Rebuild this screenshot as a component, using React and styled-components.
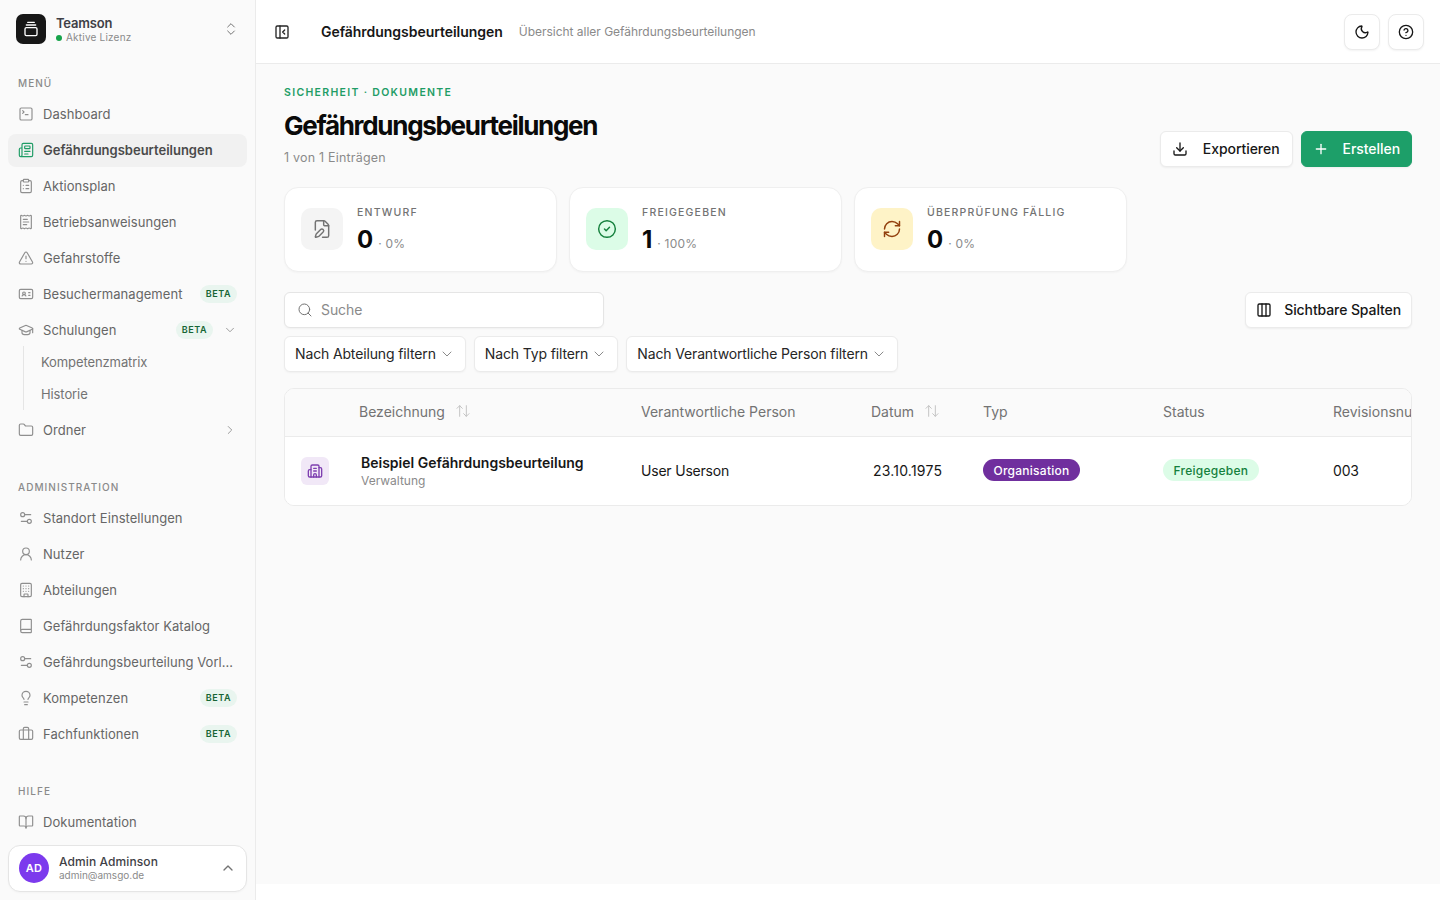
import React from 'react';
import styled, { createGlobalStyle } from 'styled-components';
import {
  SquareTerminal, Newspaper, ClipboardList, ReceiptText, TriangleAlert, IdCard, GraduationCap,
  Folder, Settings2, UserRound, Building, Book, Lightbulb, Briefcase, BookOpen,
  GalleryVerticalEnd, ChevronsUpDown, ChevronDown, ChevronRight, ChevronUp, PanelLeftClose,
  Moon, CircleHelp, Download, Plus, FilePen, CircleCheck, RefreshCw, Search, Columns3,
  ArrowUpDown, Building2,
} from 'lucide-react';

const Global = createGlobalStyle`
  * { box-sizing: border-box; }
  html, body { margin: 0; padding: 0; background: #fff; }
  body { font-family: Inter, "Liberation Sans", sans-serif; color: #0a0a0a; -webkit-font-smoothing: antialiased; }
`;

const Shell = styled.div`
  display: flex;
  width: 1440px;
  height: 900px;
  overflow: hidden;
  background: #fff;
`;

const Sidebar = styled.aside`
  width: 256px;
  flex: none;
  height: 900px;
  display: flex;
  flex-direction: column;
  background: #fafafa;
  border-right: 1px solid #ebebeb;
`;

const Brand = styled.div`
  height: 75px;
  flex: none;
  padding: 14px 16px 0;
  display: flex;
  align-items: flex-start;
  gap: 10px;
`;

const Logo = styled.div`
  width: 30px;
  height: 30px;
  border-radius: 7px;
  background: #171717;
  color: #fff;
  display: flex;
  align-items: center;
  justify-content: center;
`;

const BrandText = styled.div`
  flex: 1;
  display: flex;
  flex-direction: column;
  padding-top: 1px;
`;

const BrandName = styled.div`
  font-size: 13px;
  line-height: 16px;
  font-weight: 600;
  letter-spacing: -0.2px;
  color: #3f3f46;
`;

const BrandStatus = styled.div`
  display: flex;
  align-items: center;
  gap: 4px;
  font-size: 10px;
  line-height: 13px;
  letter-spacing: 0.2px;
  color: #8a8a8a;
`;

const Dot = styled.span`
  width: 6px;
  height: 6px;
  border-radius: 50%;
  background: #16a34a;
`;

const BrandToggle = styled.div`
  color: #737373;
  height: 30px;
  display: flex;
  align-items: center;
`;

const Nav = styled.nav`
  flex: 1;
  min-height: 0;
  display: flex;
  flex-direction: column;
  padding: 0 8px;
`;

const Section = styled.section`
  display: flex;
  flex-direction: column;
  gap: 3px;
  & + & { margin-top: 32px; }
`;

const SectionLabel = styled.div`
  height: 16px;
  margin-bottom: 4px;
  padding-left: 10px;
  font-size: 10px;
  line-height: 16px;
  font-weight: 500;
  letter-spacing: 1.05px;
  color: #8a8a8a;
`;

const Item = styled.div`
  height: 33px;
  flex: none;
  display: flex;
  align-items: center;
  gap: 9px;
  padding: 0 10px 1px;
  border-radius: 8px;
  font-size: 13px;
  letter-spacing: ${p => (p.$active ? '0' : '0.05px')};
  font-weight: ${p => (p.$active ? 600 : 400)};
  color: ${p => (p.$active ? '#4a4a4a' : '#666')};
  background: ${p => (p.$active ? '#f1f1f1' : 'transparent')};
  svg { flex: none; color: ${p => (p.$active ? '#1f9d66' : '#8f8f8f')}; }
`;

const ItemLabel = styled.span`
  flex: 1;
  min-width: 0;
  white-space: nowrap;
  overflow: hidden;
  text-overflow: ellipsis;
`;

const Beta = styled.span`
  flex: none;
  width: 37px;
  height: 18px;
  border-radius: 9px;
  margin-right: ${p => (p.$inline ? '1px' : '0')};
  background: #e9f5ef;
  color: #166534;
  font-size: 9px;
  line-height: 18px;
  font-weight: 600;
  letter-spacing: 0.6px;
  text-align: center;
`;

const Group = styled.div`
  display: flex;
  flex-direction: column;
`;

const Sub = styled.div`
  margin: -1px 0 1px 15px;
  border-left: 1px solid #e5e5e5;
  display: flex;
  flex-direction: column;
`;

const SubItem = styled.div`
  height: 32px;
  padding: 0 0 1px 17px;
  display: flex;
  align-items: center;
  font-size: 13px;
  letter-spacing: -0.1px;
  color: #737373;
`;

const SideFoot = styled.div`
  flex: none;
  padding: 0 8px 8px;
`;

const UserCard = styled.div`
  height: 47px;
  border: 1px solid #e5e5e5;
  border-radius: 12px;
  background: #fff;
  display: flex;
  align-items: center;
  gap: 10px;
  padding: 0 10px 1px 10px;
  box-shadow: 0 1px 2px rgba(0,0,0,.03);
  svg { color: #737373; }
`;

const Avatar = styled.div`
  width: 30px;
  height: 30px;
  border-radius: 50%;
  background: #7c3aed;
  color: #fff;
  font-size: 11px;
  font-weight: 600;
  letter-spacing: 0.3px;
  display: flex;
  align-items: center;
  justify-content: center;
`;

const UserText = styled.div`
  flex: 1;
  display: flex;
  flex-direction: column;
`;

const UserName = styled.div`
  font-size: 12px;
  line-height: 15px;
  font-weight: 500;
  letter-spacing: 0.1px;
  color: #3f3f46;
`;

const UserMail = styled.div`
  font-size: 10px;
  line-height: 13px;
  color: #8a8a8a;
`;

const Column = styled.div`
  flex: 1;
  min-width: 0;
  display: flex;
  flex-direction: column;
  height: 884px;
  background: #fafafa;
`;

const Topbar = styled.header`
  height: 64px;
  flex: none;
  background: #fff;
  border-bottom: 1px solid #ebebeb;
  display: flex;
  align-items: center;
  padding: 0 16px 0 18px;
`;

const TopTitle = styled.div`
  margin-left: 31px;
  font-size: 14px;
  font-weight: 600;
  letter-spacing: -0.04px;
  color: #171717;
`;

const TopSub = styled.div`
  margin-left: 16px;
  flex: 1;
  font-size: 12px;
  letter-spacing: -0.02px;
  color: #8a8a8a;
`;

const IconBtn = styled.button`
  width: 36px;
  height: 36px;
  margin-left: 8px;
  padding: 0;
  border: 1px solid #ebebeb;
  border-radius: 8px;
  background: #fff;
  color: #171717;
  display: flex;
  align-items: center;
  justify-content: center;
  box-shadow: 0 1px 2px rgba(0,0,0,.05);
`;

const Content = styled.main`
  flex: 1;
  padding: 21px 28px 0;
  display: flex;
  flex-direction: column;
`;

const PageHead = styled.div`
  display: flex;
  align-items: flex-end;
  justify-content: space-between;
`;

const Eyebrow = styled.div`
  font-size: 10.5px;
  line-height: 16px;
  font-weight: 600;
  letter-spacing: 1.32px;
  color: #1f9d66;
`;

const H1 = styled.h1`
  margin: 8px 0 0;
  font-size: 26px;
  line-height: 34px;
  font-weight: 700;
  letter-spacing: -1.3px;
  color: #0a0a0a;
`;

const Count = styled.div`
  margin-top: 6px;
  font-size: 12.5px;
  line-height: 18px;
  letter-spacing: 0.2px;
  color: #8a8a8a;
`;

const Actions = styled.div`
  display: flex;
  gap: 8px;
`;

const Button = styled.button`
  height: 36px;
  display: flex;
  align-items: center;
  gap: ${p => p.$gap}px;
  padding: 0 ${p => p.$pr}px 1px 11px;
  border-radius: 6px;
  font-family: inherit;
  font-size: 14px;
  font-weight: 500;
  letter-spacing: -0.05px;
  border: 1px solid ${p => (p.$primary ? '#1d9f69' : '#ebebeb')};
  background: ${p => (p.$primary ? '#1d9f69' : '#fff')};
  color: ${p => (p.$primary ? '#fff' : '#171717')};
  box-shadow: 0 1px 2px rgba(0,0,0,.05);
`;

const ColumnsButton = styled(Button)`
  padding: 0 10px 1px;
  letter-spacing: -0.1px;
`;

const Stats = styled.div`
  display: grid;
  grid-template-columns: repeat(4, 1fr);
  gap: 12px;
  margin-top: 20px;
`;

const StatCard = styled.div`
  height: 85px;
  background: #fff;
  border: 1px solid #efefef;
  border-radius: 14px;
  display: flex;
  align-items: center;
  gap: 14px;
  padding: 0 0 1px 16px;
  box-shadow: 0 1px 2px rgba(0,0,0,.03);
`;

const StatIcon = styled.div`
  width: 42px;
  height: 42px;
  border-radius: 10px;
  display: flex;
  align-items: center;
  justify-content: center;
  background: ${p => p.$bg};
  color: ${p => p.$fg};
`;

const StatBody = styled.div`
  display: flex;
  flex-direction: column;
  padding-top: 4px;
`;

const StatLabel = styled.div`
  font-size: 10.5px;
  line-height: 14px;
  font-weight: 500;
  letter-spacing: 1.2px;
  color: #737373;
`;

const StatLine = styled.div`
  display: flex;
  align-items: baseline;
  gap: 5px;
  margin-top: 4px;
`;

const StatValue = styled.span`
  font-size: 24px;
  line-height: 32px;
  font-weight: 700;
  color: #0a0a0a;
`;

const StatPct = styled.span`
  font-size: 12px;
  letter-spacing: 0.2px;
  color: #8a8a8a;
`;

const SearchRow = styled.div`
  display: flex;
  justify-content: space-between;
  margin-top: 20px;
`;

const SearchBox = styled.div`
  width: 320px;
  height: 36px;
  background: #fff;
  border: 1px solid #e5e5e5;
  border-radius: 6px;
  display: flex;
  align-items: center;
  gap: 8px;
  padding: 0 0 1px 12px;
  font-size: 14px;
  letter-spacing: -0.1px;
  color: #8a8a8a;
  box-shadow: 0 1px 2px rgba(0,0,0,.04);
  svg { color: #737373; }
`;

const Filters = styled.div`
  display: flex;
  gap: 8px;
  margin-top: 8px;
`;

const Filter = styled.div`
  height: 36px;
  background: #fff;
  border: 1px solid #ebebeb;
  border-radius: 6px;
  display: flex;
  align-items: center;
  gap: 3px;
  padding: 0 10px 1px;
  font-size: 14px;
  letter-spacing: -0.14px;
  color: #262626;
  box-shadow: 0 1px 2px rgba(0,0,0,.04);
  svg { color: #8a8a8a; }
`;

const Table = styled.div`
  margin-top: 16px;
  background: #fff;
  border: 1px solid #ebebeb;
  border-radius: 10px;
  overflow: hidden;
`;

const Row = styled.div`
  display: grid;
  grid-template-columns: 74px 282px 230px 112px 180px 170px 200px;
  align-items: center;
  width: 1248px;
  height: ${p => (p.$head ? '48px' : '68px')};
  padding-bottom: ${p => (p.$head ? '3px' : '0')};
  background: ${p => (p.$head ? '#fafafa' : '#fff')};
  border-bottom: ${p => (p.$head ? '1px solid #ebebeb' : '0')};
`;

const HeadCell = styled.div`
  display: flex;
  align-items: center;
  gap: 10px;
  font-size: 14px;
  color: #737373;
  white-space: nowrap;
  svg { color: #c4c4c4; }
`;

const Cell = styled.div`
  font-size: 14px;
  letter-spacing: -0.2px;
  color: #171717;
  padding-bottom: 2px;
`;

const DateCell = styled(Cell)`
  padding-left: 2px;
  letter-spacing: 0.2px;
`;

const NameCell = styled.div`
  padding: 1px 0 0 2px;
`;

const RowIcon = styled.div`
  width: 28px;
  height: 28px;
  margin-left: 16px;
  border-radius: 6px;
  background: #f1e8f7;
  color: #7e3fb0;
  display: flex;
  align-items: center;
  justify-content: center;
`;

const RowName = styled.div`
  font-size: 14px;
  line-height: 18px;
  font-weight: 600;
  color: #171717;
`;

const RowSub = styled.div`
  font-size: 12px;
  line-height: 17px;
  color: #8a8a8a;
`;

const Pill = styled.span`
  display: inline-flex;
  align-items: center;
  height: 22px;
  padding: 0 10.5px;
  border-radius: 11px;
  font-size: 12px;
  font-weight: 500;
  letter-spacing: 0.25px;
  background: ${p => p.$bg};
  color: ${p => p.$fg};
`;

const I = { size: 16, strokeWidth: 1.75 };

const NavItem = ({ icon: Icon, label, active, beta, chevron }) => (
  <Item $active={active}>
    <Icon {...I} />
    <ItemLabel>{label}</ItemLabel>
    {beta && <Beta $inline={!!chevron}>BETA</Beta>}
    {chevron}
  </Item>
);

export default function App() {
  return (
    <>
      <Global />
      <Shell>
        <Sidebar>
          <Brand>
            <Logo><GalleryVerticalEnd size={16} strokeWidth={2} /></Logo>
            <BrandText>
              <BrandName>Teamson</BrandName>
              <BrandStatus><Dot />Aktive Lizenz</BrandStatus>
            </BrandText>
            <BrandToggle><ChevronsUpDown size={16} strokeWidth={1.5} /></BrandToggle>
          </Brand>
          <Nav>
            <Section>
              <SectionLabel>MENÜ</SectionLabel>
              <NavItem icon={SquareTerminal} label="Dashboard" />
              <NavItem icon={Newspaper} label="Gefährdungsbeurteilungen" active />
              <NavItem icon={ClipboardList} label="Aktionsplan" />
              <NavItem icon={ReceiptText} label="Betriebsanweisungen" />
              <NavItem icon={TriangleAlert} label="Gefahrstoffe" />
              <NavItem icon={IdCard} label="Besuchermanagement" beta />
              <Group>
                <NavItem icon={GraduationCap} label="Schulungen" beta chevron={<ChevronDown size={14} strokeWidth={1.5} />} />
                <Sub>
                  <SubItem>Kompetenzmatrix</SubItem>
                  <SubItem>Historie</SubItem>
                </Sub>
              </Group>
              <NavItem icon={Folder} label="Ordner" chevron={<ChevronRight size={14} strokeWidth={1.5} />} />
            </Section>
            <Section>
              <SectionLabel>ADMINISTRATION</SectionLabel>
              <NavItem icon={Settings2} label="Standort Einstellungen" />
              <NavItem icon={UserRound} label="Nutzer" />
              <NavItem icon={Building} label="Abteilungen" />
              <NavItem icon={Book} label="Gefährdungsfaktor Katalog" />
              <NavItem icon={Settings2} label="Gefährdungsbeurteilung Vorlagen" />
              <NavItem icon={Lightbulb} label="Kompetenzen" beta />
              <NavItem icon={Briefcase} label="Fachfunktionen" beta />
            </Section>
            <Section>
              <SectionLabel>HILFE</SectionLabel>
              <NavItem icon={BookOpen} label="Dokumentation" />
            </Section>
          </Nav>
          <SideFoot>
            <UserCard>
              <Avatar>AD</Avatar>
              <UserText>
                <UserName>Admin Adminson</UserName>
                <UserMail>admin@amsgo.de</UserMail>
              </UserText>
              <ChevronUp size={16} strokeWidth={2} />
            </UserCard>
          </SideFoot>
        </Sidebar>
        <Column>
          <Topbar>
            <PanelLeftClose size={16} strokeWidth={2} color="#262626" />
            <TopTitle>Gefährdungsbeurteilungen</TopTitle>
            <TopSub>Übersicht aller Gefährdungsbeurteilungen</TopSub>
            <IconBtn><Moon size={16} strokeWidth={2} /></IconBtn>
            <IconBtn><CircleHelp size={16} strokeWidth={2} /></IconBtn>
          </Topbar>
          <Content>
            <PageHead>
              <div>
                <Eyebrow>SICHERHEIT · DOKUMENTE</Eyebrow>
                <H1>Gefährdungsbeurteilungen</H1>
                <Count>1 von 1 Einträgen</Count>
              </div>
              <Actions>
                <Button $gap={15} $pr={12}><Download size={16} strokeWidth={2} />Exportieren</Button>
                <Button $primary $gap={14} $pr={11}><Plus size={16} strokeWidth={2} />Erstellen</Button>
              </Actions>
            </PageHead>
            <Stats>
              <StatCard>
                <StatIcon $bg="#f4f4f4" $fg="#737373"><FilePen size={20} strokeWidth={1.75} /></StatIcon>
                <StatBody>
                  <StatLabel>ENTWURF</StatLabel>
                  <StatLine><StatValue>0</StatValue><StatPct>· 0%</StatPct></StatLine>
                </StatBody>
              </StatCard>
              <StatCard>
                <StatIcon $bg="#dcfce7" $fg="#15803d"><CircleCheck size={20} strokeWidth={1.75} /></StatIcon>
                <StatBody>
                  <StatLabel>FREIGEGEBEN</StatLabel>
                  <StatLine><StatValue>1</StatValue><StatPct>· 100%</StatPct></StatLine>
                </StatBody>
              </StatCard>
              <StatCard>
                <StatIcon $bg="#fef3c7" $fg="#92400e"><RefreshCw size={20} strokeWidth={1.75} /></StatIcon>
                <StatBody>
                  <StatLabel>ÜBERPRÜFUNG FÄLLIG</StatLabel>
                  <StatLine><StatValue>0</StatValue><StatPct>· 0%</StatPct></StatLine>
                </StatBody>
              </StatCard>
            </Stats>
            <SearchRow>
              <SearchBox><Search size={16} strokeWidth={1.5} />Suche</SearchBox>
              <ColumnsButton $gap={12}><Columns3 size={16} strokeWidth={2} />Sichtbare Spalten</ColumnsButton>
            </SearchRow>
            <Filters>
              <Filter>Nach Abteilung filtern<ChevronDown size={16} strokeWidth={1.5} /></Filter>
              <Filter>Nach Typ filtern<ChevronDown size={16} strokeWidth={1.5} /></Filter>
              <Filter>Nach Verantwortliche Person filtern<ChevronDown size={16} strokeWidth={1.5} /></Filter>
            </Filters>
            <Table>
              <Row $head>
                <span />
                <HeadCell>Bezeichnung<ArrowUpDown size={16} strokeWidth={1.5} /></HeadCell>
                <HeadCell>Verantwortliche Person</HeadCell>
                <HeadCell>Datum<ArrowUpDown size={16} strokeWidth={1.5} /></HeadCell>
                <HeadCell>Typ</HeadCell>
                <HeadCell>Status</HeadCell>
                <HeadCell>Revisionsnummer</HeadCell>
              </Row>
              <Row>
                <RowIcon><Building2 size={16} strokeWidth={2} /></RowIcon>
                <NameCell>
                  <RowName>Beispiel Gefährdungsbeurteilung</RowName>
                  <RowSub>Verwaltung</RowSub>
                </NameCell>
                <Cell>User Userson</Cell>
                <DateCell>23.10.1975</DateCell>
                <Cell><Pill $bg="#702f9e" $fg="#fff">Organisation</Pill></Cell>
                <Cell><Pill $bg="#dcfce7" $fg="#15803d">Freigegeben</Pill></Cell>
                <Cell>003</Cell>
              </Row>
            </Table>
          </Content>
        </Column>
      </Shell>
    </>
  );
}
